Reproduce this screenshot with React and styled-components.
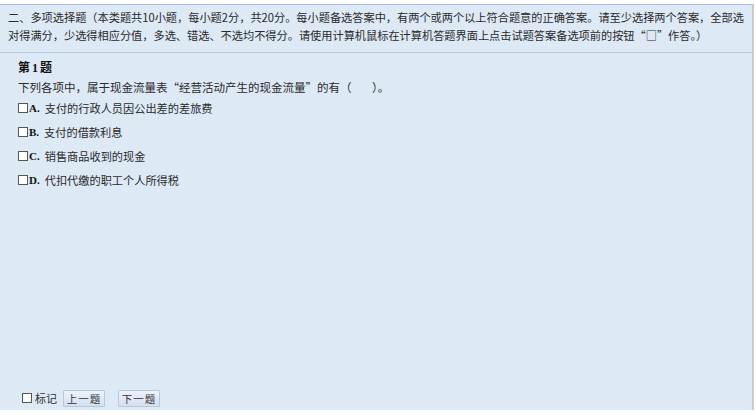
import React from 'react';
import styled, {createGlobalStyle} from 'styled-components';

const GlobalStyle = createGlobalStyle`
    html, body {
        margin: 0;
        padding: 0;
        background-color: #fff;
    }
    body {
        font-family: "Noto Sans CJK SC", "Liberation Sans", sans-serif;
        color: #222;
    }
`;

const options = [
    {key: 'A', text: '支付的行政人员因公出差的差旅费'},
    {key: 'B', text: '支付的借款利息'},
    {key: 'C', text: '销售商品收到的现金'},
    {key: 'D', text: '代扣代缴的职工个人所得税'},
];

export default function App () {
    return(
        <>
            <GlobalStyle/>
            <Panel>
                <Header>
                    二、多项选择题（本类题共10小题，每小题2分，共20分。每小题备选答案中，有两个或两个以上符合题意的正确答案。请至少选择两个答案，全部选<br/>
                    对得满分，少选得相应分值，多选、错选、不选均不得分。请使用计算机鼠标在计算机答题界面上点击试题答案备选项前的按钮“□”作答。）
                </Header>

                <Body>
                    <Title>第<Num>1</Num>题</Title>
                    <Question>下列各项中，属于现金流量表“经营活动产生的现金流量”的有（&nbsp;&nbsp;&nbsp;&nbsp;&nbsp;&nbsp;&nbsp;&nbsp;）。</Question>

                    {options.map((opt) => (
                        <Option key={opt.key}>
                            <Box/>
                            <Letter>{opt.key}.</Letter>
                            <OptionText>{opt.text}</OptionText>
                        </Option>
                    ))}
                </Body>

                <Footer>
                    <Box/>
                    <MarkText>标记</MarkText>
                    <NavButton>上一题</NavButton>
                    <NavButton>下一题</NavButton>
                </Footer>
            </Panel>
        </>
    );
}

const Panel = styled.div`
    margin-top: 4px;
    width: 752px;
    height: 405px;
    background-color: #dde9f5;
    border-top: 1px solid #a7c2e4;
    border-right: 2px solid #c9cdd2;

    display: flex;
    flex-direction: column;
`;

const Header = styled.div`
    padding: 3px 8px 8px 8px;
    font-size: 11.2px;
    line-height: 18px;
    color: #2a2a2a;
    white-space: nowrap;
    border-bottom: 1px solid #b4cbe8;
`;

const Body = styled.div`
    padding: 4px 18px 0px 18px;
    display: flex;
    flex-direction: column;
`;

const Title = styled.div`
    font-size: 12px;
    font-weight: bold;
    line-height: 20px;
    color: #111;
`;

const Num = styled.span`
    font-family: "Liberation Serif", serif;
    margin: 0px 2px;
`;

const Question = styled.div`
    font-size: 11.5px;
    line-height: 18px;
    color: #2a2a2a;
`;

const Option = styled.div`
    display: flex;
    flex-direction: row;
    align-items: center;
    height: 24px;
    font-size: 11.2px;
`;

const Box = styled.span`
    display: inline-block;
    width: 8px;
    height: 8px;
    border: 1px solid #555;
    background-color: #fff;
    margin-right: 1px;
    flex-shrink: 0;
`;

const Letter = styled.span`
    font-family: "Liberation Serif", serif;
    font-weight: bold;
    font-size: 11px;
    color: #111;
    margin-right: 5px;
`;

const OptionText = styled.span`
    color: #2a2a2a;
`;

const Footer = styled.div`
    margin-top: auto;
    display: flex;
    flex-direction: row;
    align-items: center;
    padding: 0px 0px 2px 22px;
    height: 20px;
    font-size: 11px;
`;

const MarkText = styled.span`
    margin: 0px 6px 0px 2px;
    color: #333;
`;

const NavButton = styled.button`
    width: 42px;
    height: 17px;
    padding: 0px;
    margin-right: 13px;
    font-family: "Noto Sans CJK SC", sans-serif;
    font-size: 10.5px;
    line-height: 15px;
    letter-spacing: 1px;
    color: #333;
    background: linear-gradient(#edf3fb, #d2e0f1);
    border: 1px solid #b4c8e2;
    border-radius: 1px;
    outline: 0;
    cursor: pointer;
`;
